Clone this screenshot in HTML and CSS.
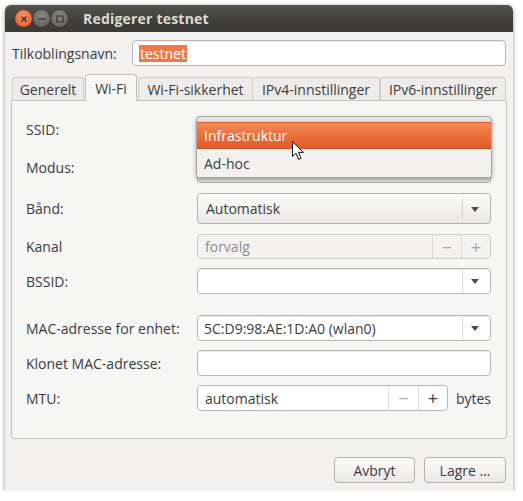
FILE: index.html
```html
<!DOCTYPE html>
<html>
<head>
<meta charset="utf-8">
<link rel="stylesheet" href="styles.css">
</head>
<body>
<div class="window">
  <div class="titlebar">
    <div class="wbtns">
      <span class="wbtn close"><svg width="8" height="8" viewBox="0 0 8 8"><path d="M1.5 1.5L6.5 6.5M6.5 1.5L1.5 6.5" stroke="#3c2a22" stroke-width="1.4" fill="none"/></svg></span>
      <span class="wbtn"><svg width="8" height="8" viewBox="0 0 8 8"><path d="M0.5 4H7.5" stroke="#3c3b37" stroke-width="1.5" fill="none"/></svg></span>
      <span class="wbtn"><svg width="8" height="8" viewBox="0 0 8 8"><rect x="1" y="1" width="6" height="6" stroke="#3c3b37" stroke-width="1.3" fill="none"/></svg></span>
    </div>
    <div class="title">Redigerer testnet</div>
  </div>
  <div class="content">
    <div class="namerow">
      <span class="namelabel">Tilkoblingsnavn:</span>
      <div class="entry nameentry"><span class="sel">testnet</span></div>
    </div>
    <div class="tabs">
      <div class="tab t1">Generelt</div>
      <div class="tab active t2">Wi-Fi</div>
      <div class="tab t3">Wi-Fi-sikkerhet</div>
      <div class="tab t4">IPv4-innstillinger</div>
      <div class="tab t5">IPv6-innstillinger</div>
    </div>
    <div class="panel">
      <div class="row r-ssid"><span class="label">SSID:</span><div class="entry ctl"></div></div>
      <div class="row r-modus"><span class="label">Modus:</span><div class="combo ctl"></div></div>
      <div class="row r-band"><span class="label">Bånd:</span><div class="combo ctl"><span class="ctext">Automatisk</span><span class="csep"></span><span class="arrow"></span></div></div>
      <div class="row r-kanal"><span class="label">Kanal</span>
        <div class="spin ctl disabled"><span class="stext">forvalg</span><span class="sbtn">−</span><span class="sbtn">+</span></div>
      </div>
      <div class="row r-bssid"><span class="label">BSSID:</span><div class="entry ecombo ctl"><span class="etext"></span><span class="esep"></span><span class="arrow"></span></div></div>
      <div class="row r-mac"><span class="label">MAC-adresse for enhet:</span><div class="entry ecombo ctl"><span class="etext">5C:D9:98:AE:1D:A0 (wlan0)</span><span class="esep"></span><span class="arrow"></span></div></div>
      <div class="row r-klon"><span class="label">Klonet MAC-adresse:</span><div class="entry ctl"></div></div>
      <div class="row r-mtu"><span class="label">MTU:</span>
        <div class="spin mtuspin"><span class="stext">automatisk</span><span class="sbtn dim w29">−</span><span class="sbtn">+</span></div>
        <span class="bytes">bytes</span>
      </div>
      <div class="popup">
        <div class="pitem hl">Infrastruktur</div>
        <div class="pitem">Ad-hoc</div>
      </div>
      <svg class="cursor" width="13" height="20" viewBox="0 0 13 20"><path d="M0.5 0.5L0.5 15.5L4 12.2L6.6 18.3L9 17.3L6.5 11.4L11.4 11.4Z" fill="#fff" stroke="#111" stroke-width="1" stroke-linejoin="round"/></svg>
    </div>
    <div class="actions">
      <div class="btn b-cancel">Avbryt</div>
      <div class="btn b-save">Lagre …</div>
    </div>
  </div>
</div>
</body>
</html>
```
FILE: styles.css
```css
html, body {
  margin: 0;
  padding: 0;
  background: #ffffff;
}
body {
  font-family: "Open Sans", "DejaVu Sans", sans-serif;
  font-size: 13.5px;
  color: #3c3c3c;
}
.window {
  margin: 5px 0 0 5px;
  width: 508px;
  height: 486px;
  background: #f2f1f0;
  border-radius: 6px 6px 0 0;
  box-shadow: 0 1px 4px rgba(0,0,0,0.45);
  display: flex;
  flex-direction: column;
}
.titlebar {
  height: 27px;
  flex: none;
  border-radius: 6px 6px 0 0;
  background: linear-gradient(#55534e, #3f3e3a 60%, #3c3b37);
  display: flex;
  align-items: center;
  position: relative;
}
.wbtns {
  display: flex;
  gap: 1px;
  margin-left: 10px;
}
.wbtn {
  width: 17px;
  height: 17px;
  border-radius: 50%;
  background: radial-gradient(circle at 50% 35%, #8a8882, #6e6c67 60%, #5d5c58);
  display: flex;
  align-items: center;
  justify-content: center;
  box-shadow: 0 0 0 0.5px #34332f;
}
.wbtn.close {
  background: radial-gradient(circle at 50% 35%, #f89a70, #ef6d3d 55%, #d9521f);
}
.title {
  margin-left: 15px;
  font-weight: bold;
  font-size: 14px;
  color: #dfdbd2;
  letter-spacing: 0.2px;
}
.content {
  flex: 1;
  display: flex;
  flex-direction: column;
  padding: 8px 6px 0 6px;
}
.namerow {
  display: flex;
  align-items: center;
  height: 26px;
  padding-left: 1px;
}
.namelabel {
  width: 120px;
  flex: none;
  font-size: 14px;
}
.entry {
  background: #ffffff;
  border: 1px solid #b9b7b3;
  border-radius: 4px;
  box-shadow: inset 0 1px 1px rgba(0,0,0,0.08);
  box-sizing: border-box;
  height: 26px;
  display: flex;
  align-items: center;
}
.nameentry {
  width: 374px;
  padding-left: 6px;
}
.sel {
  background: #f07746;
  color: #ffffff;
  padding: 0 1px;
  line-height: 17px;
  font-size: 14px;
}
.tabs {
  display: flex;
  align-items: flex-end;
  height: 26px;
  margin-top: 8px;
  padding-left: 1px;
}
.tab {
  height: 23px;
  box-sizing: border-box;
  border: 1px solid #cfccc8;
  border-bottom: none;
  border-radius: 3px 3px 0 0;
  background: #edecea;
  display: flex;
  align-items: center;
  justify-content: center;
  font-size: 14px;
  color: #3c3c3c;
}
.tab.active {
  height: 27px;
  background: #f6f6f5;
  border-color: #c4c1bd;
  position: relative;
  top: 1px;
  margin: 0 1px;
  z-index: 1;
}
.t1 { width: 72px; }
.t2 { width: 52px; }
.t3 { width: 115px; }
.t4 { width: 127px; border-left: none; }
.t5 { width: 126px; border-left: 1px solid #cfccc8; }
.panel {
  position: relative;
  height: 339px;
  box-sizing: border-box;
  border: 1px solid #c4c1bd;
  border-radius: 0 0 3px 3px;
  background: #f6f6f5;
  width: 496px;
  padding: 15px 15px 0 14px;
}
.row {
  display: flex;
  align-items: center;
}
.label {
  width: 171px;
  flex: none;
  font-size: 14px;
}
.ctl { width: 294px; }
.r-ssid { height: 26px; }
.r-modus { height: 31px; margin-top: 10px; }
.r-band { height: 31px; margin-top: 10px; }
.r-kanal { height: 25px; margin-top: 10px; }
.r-bssid { height: 26px; margin-top: 9px; }
.r-mac { height: 26px; margin-top: 21px; }
.r-klon { height: 26px; margin-top: 9px; }
.r-mtu { height: 26px; margin-top: 9px; }
.combo {
  height: 31px;
  box-sizing: border-box;
  border: 1px solid #b5b2ad;
  border-radius: 4px;
  background: linear-gradient(#fbfbfa, #f1f0ef 60%, #e9e8e6);
  display: flex;
  align-items: center;
  padding-left: 8px;
  font-size: 14px;
}
.ctext { flex: 1; }
.csep {
  width: 1px;
  height: 21px;
  background: #d3d1cd;
  margin-right: 8px;
}
.arrow {
  width: 0;
  height: 0;
  border-left: 4px solid transparent;
  border-right: 4px solid transparent;
  border-top: 5px solid #4a4a48;
  margin-right: 11px;
  margin-top: 1px;
}
.ecombo {
  padding-left: 6px;
}
.etext { flex: 1; font-size: 14px; }
.esep {
  width: 1px;
  align-self: stretch;
  background: #dcdad6;
  margin-right: 8px;
}
.ecombo .arrow { margin-right: 11px; }
.spin {
  height: 25px;
  box-sizing: border-box;
  border: 1px solid #b9b7b3;
  border-radius: 4px;
  background: #ffffff;
  display: flex;
  align-items: stretch;
  font-size: 14px;
}
.spin.disabled {
  background: #f3f2f1;
  border-color: #cdcbc7;
  color: #8f8d8a;
}
.stext {
  flex: 1;
  display: flex;
  align-items: center;
  padding-left: 7px;
}
.sbtn {
  width: 28px;
  border-left: 1px solid #dddbd8;
  display: flex;
  align-items: center;
  justify-content: center;
  font-size: 18px;
  color: #3c3c3c;
  line-height: 1;
}
.sbtn.w29 { width: 29px; }
.spin.disabled .sbtn { color: #a9a7a4; }
.sbtn.dim { color: #a9a7a4; }
.mtuspin {
  width: 251px;
  height: 26px;
}
.bytes {
  margin-left: 8px;
  font-size: 14px;
}
.popup {
  position: absolute;
  left: 184px;
  top: 15px;
  width: 296px;
  box-sizing: border-box;
  padding-top: 5px;
  border: 1px solid #a9a6a1;
  border-radius: 4px;
  background: linear-gradient(#e8e7e5, #dcdad7 6px, #f2f1f0 6px);
  box-shadow: 0 2px 4px rgba(0,0,0,0.35);
  overflow: hidden;
}
.pitem {
  height: 28px;
  display: flex;
  align-items: center;
  padding-left: 7px;
  font-size: 14px;
  color: #3c3c3c;
  background: #f2f1f0;
}
.pitem.hl {
  background: linear-gradient(#f5895a, #e96a37 60%, #e35d2a);
  color: #ffffff;
  border-top: 1px solid #d0582a;
  border-bottom: 1px solid #c7542a;
  height: 27px;
  box-sizing: border-box;
}
.cursor {
  position: absolute;
  left: 280px;
  top: 40px;
}
.actions {
  display: flex;
  justify-content: flex-end;
  gap: 9px;
  margin-top: 18px;
  padding-right: 1px;
}
.btn {
  height: 26px;
  box-sizing: border-box;
  border: 1px solid #b3b0ab;
  border-radius: 4px;
  background: linear-gradient(#fbfbfa, #f1f0ef 60%, #e8e7e5);
  display: flex;
  align-items: center;
  justify-content: center;
  font-size: 14px;
}
.b-cancel { width: 81px; }
.b-save { width: 82px; }
```
